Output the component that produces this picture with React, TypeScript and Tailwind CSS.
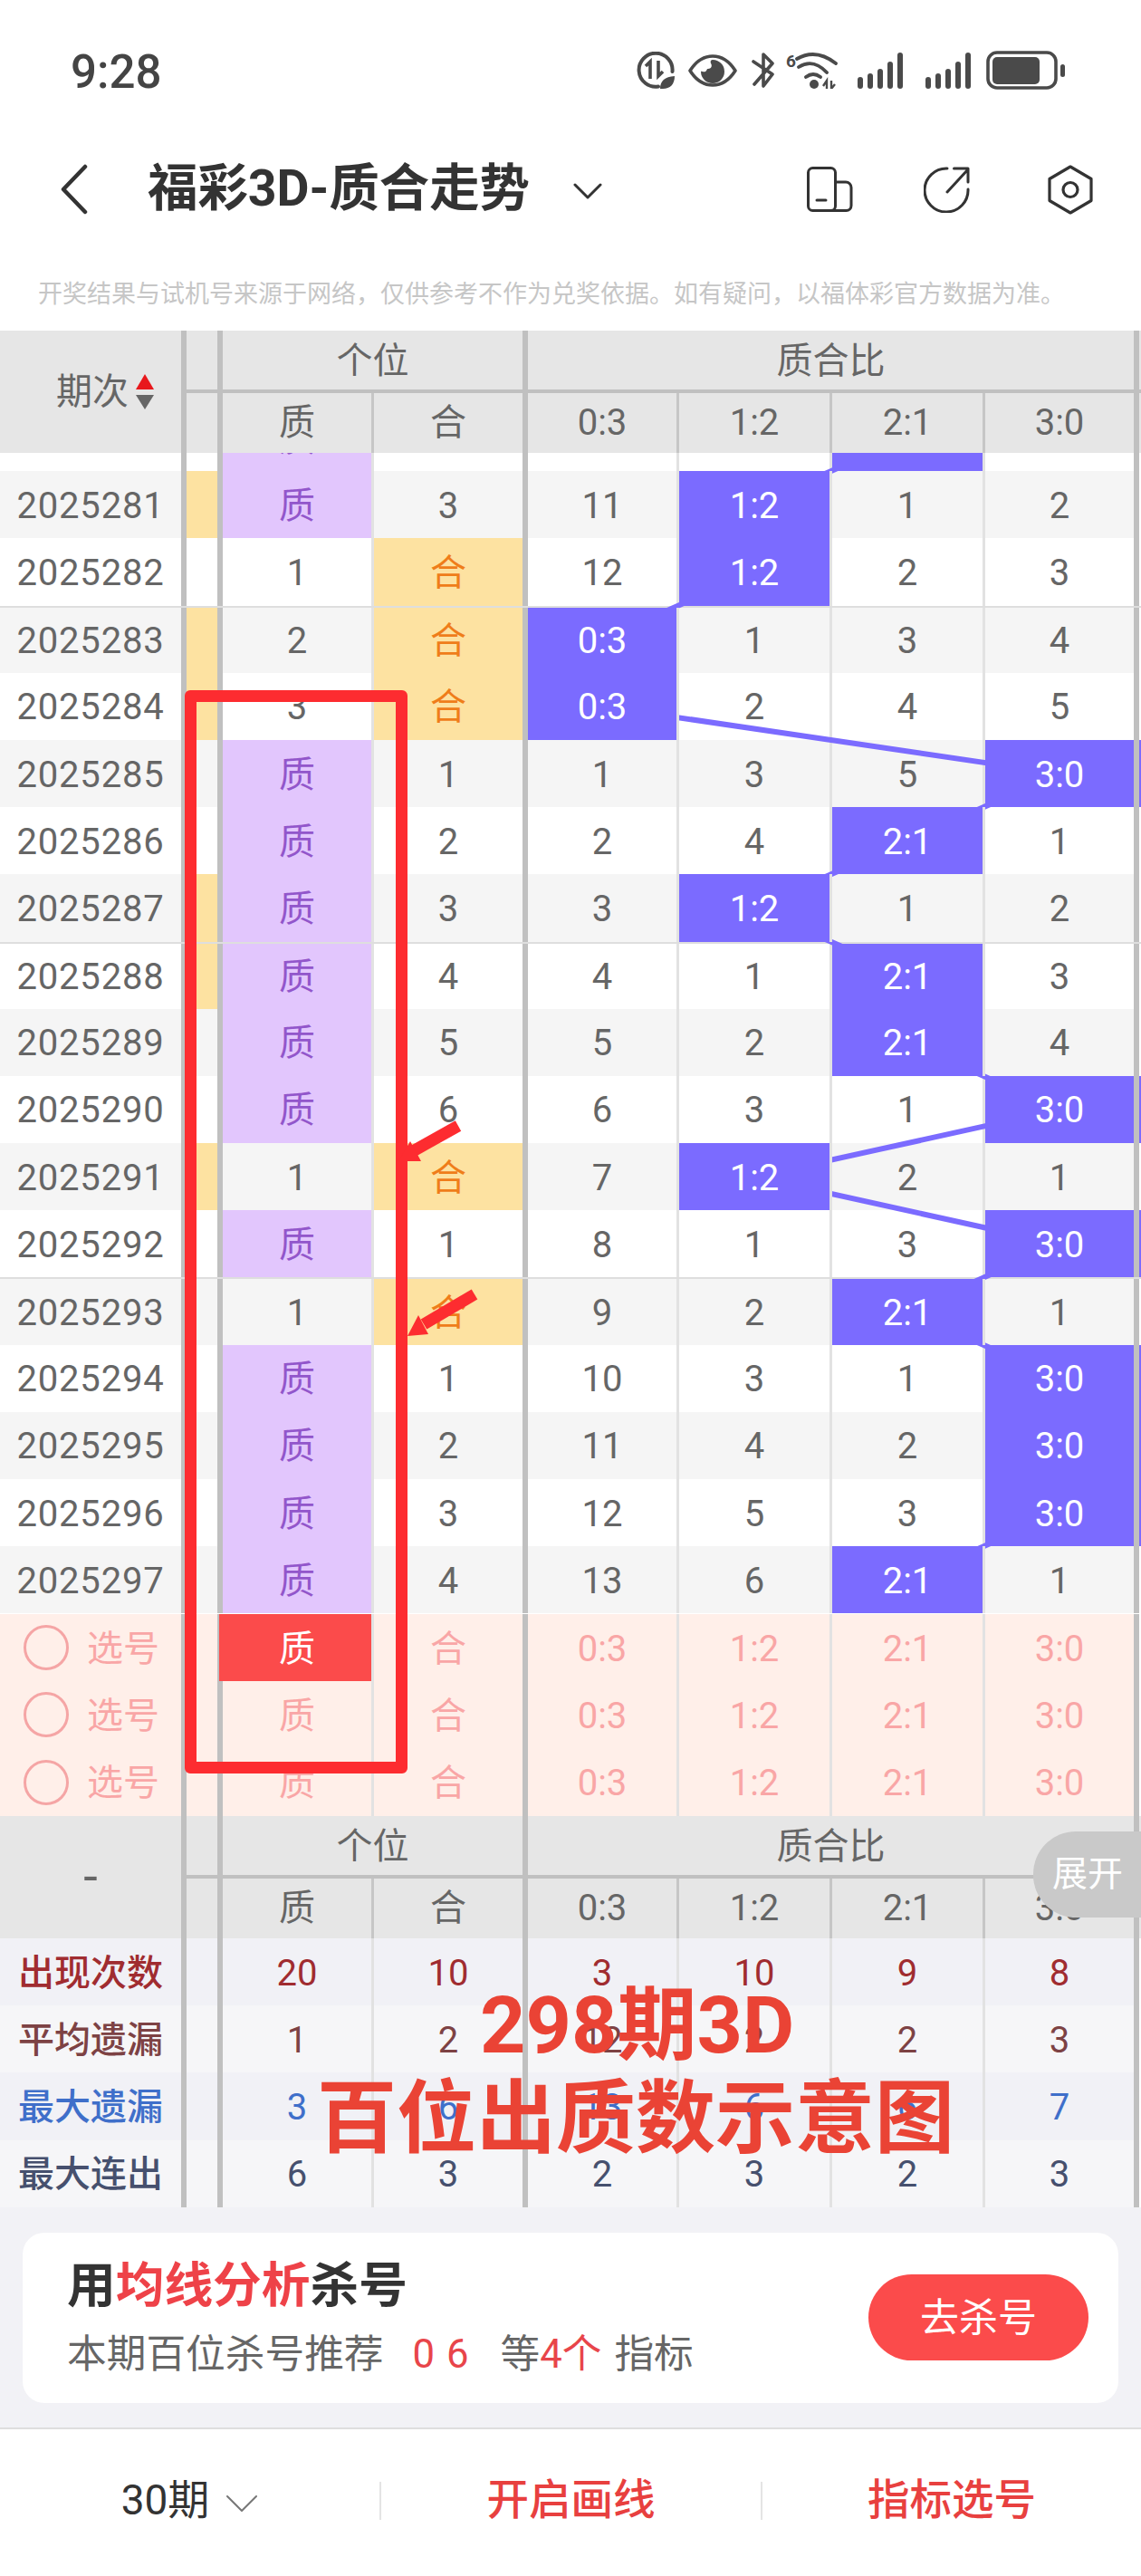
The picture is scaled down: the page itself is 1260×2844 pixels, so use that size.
import React from 'react';

const DARK = 'border-r-[6px] border-[#c0c0c0]';
const LIGHT = 'border-r-[3px] border-[#e2e2e2]';
const HEAD_LIGHT = 'border-r-[3px] border-[#c6c6c6]';

const ROW_H = 74.2;
const RATIO_X = [665, 833, 1002, 1170];
const RATIOS = ['0:3', '1:2', '2:1', '3:0'];

interface Row {
    id: string;
    side?: boolean;
    zhi: string;
    he: string;
    ratios: string[];
}

const rows: Row[] = [
    { id: '2025280', zhi: '质', he: '2', ratios: ['10', '1', '2:1', '1'] },
    { id: '2025281', side: true, zhi: '质', he: '3', ratios: ['11', '1:2', '1', '2'] },
    { id: '2025282', zhi: '1', he: '合', ratios: ['12', '1:2', '2', '3'] },
    { id: '2025283', side: true, zhi: '2', he: '合', ratios: ['0:3', '1', '3', '4'] },
    { id: '2025284', side: true, zhi: '3', he: '合', ratios: ['0:3', '2', '4', '5'] },
    { id: '2025285', zhi: '质', he: '1', ratios: ['1', '3', '5', '3:0'] },
    { id: '2025286', zhi: '质', he: '2', ratios: ['2', '4', '2:1', '1'] },
    { id: '2025287', side: true, zhi: '质', he: '3', ratios: ['3', '1:2', '1', '2'] },
    { id: '2025288', side: true, zhi: '质', he: '4', ratios: ['4', '1', '2:1', '3'] },
    { id: '2025289', zhi: '质', he: '5', ratios: ['5', '2', '2:1', '4'] },
    { id: '2025290', zhi: '质', he: '6', ratios: ['6', '3', '1', '3:0'] },
    { id: '2025291', side: true, zhi: '1', he: '合', ratios: ['7', '1:2', '2', '1'] },
    { id: '2025292', zhi: '质', he: '1', ratios: ['8', '1', '3', '3:0'] },
    { id: '2025293', zhi: '1', he: '合', ratios: ['9', '2', '2:1', '1'] },
    { id: '2025294', zhi: '质', he: '1', ratios: ['10', '3', '1', '3:0'] },
    { id: '2025295', zhi: '质', he: '2', ratios: ['11', '4', '2', '3:0'] },
    { id: '2025296', zhi: '质', he: '3', ratios: ['12', '5', '3', '3:0'] },
    { id: '2025297', zhi: '质', he: '4', ratios: ['13', '6', '2:1', '1'] },
];

const groupStart = ['2025283', '2025288', '2025293'];

const stats = [
    { label: '出现次数', values: ['20', '10', '3', '10', '9', '8'], color: 'text-[#a02c30]', bg: 'bg-[#f1f1f6]' },
    { label: '平均遗漏', values: ['1', '2', '12', '2', '2', '3'], color: 'text-[#7d4244]', bg: 'bg-[#f6f6f8]' },
    { label: '最大遗漏', values: ['3', '6', '13', '6', '6', '7'], color: 'text-[#3f6fca]', bg: 'bg-[#f1f1f6]' },
    { label: '最大连出', values: ['6', '3', '2', '3', '2', '3'], color: 'text-[#46506e]', bg: 'bg-[#f6f6f8]' },
];

const valueCols = [
    `w-[167px] ${LIGHT}`,
    `w-[170px] ${DARK}`,
    `w-[167px] ${LIGHT}`,
    `w-[169px] ${LIGHT}`,
    `w-[169px] ${LIGHT}`,
    `w-[170px] ${DARK}`,
];

const headCols = [
    `w-[167px] ${HEAD_LIGHT}`,
    `w-[170px] ${DARK}`,
    `w-[167px] ${HEAD_LIGHT}`,
    `w-[169px] ${HEAD_LIGHT}`,
    `w-[169px] ${HEAD_LIGHT}`,
    `w-[170px] ${DARK}`,
];

const center = 'flex items-center justify-center';
const cell = 'flex items-center justify-center pt-[3px]';

const StatusIcons = () => (
    <div className="flex items-center text-[#4a4a4a]">
        {/* data saver */}
        <svg width="42" height="41" viewBox="0 0 42 41" fill="none">
            <path d="M24 38.500A18.500 18.500 0 1 1 39.500 22" stroke="currentColor" strokeWidth="4" strokeLinecap="round" />
            <path d="M10 16l5-5v19M24 10v17l5-5" stroke="currentColor" strokeWidth="3.600" />
            <path d="M26 41c0-9 5-13 16-14 0 9-5 14-13 14z" fill="currentColor" />
        </svg>
        {/* eye */}
        <svg className="ml-[15px]" width="54" height="36" viewBox="0 0 54 36" fill="none">
            <path d="M2 18C9 7 17 2 27 2s18 5 25 16c-7 11-15 16-25 16S9 29 2 18z" stroke="currentColor" strokeWidth="3.600" strokeLinejoin="round" />
            <path d="M27 6a13 13 0 1 1-13 13c0-1 3 1 5 0 2-1 1-3 3-3 3 0 5-3 3-6-1-2 0-4 2-4z" fill="currentColor" />
        </svg>
        {/* bluetooth off */}
        <svg className="ml-[16px]" width="26" height="41" viewBox="0 0 26 41" fill="none">
            <path d="M2 11l21 14-10 13V3l10 10L3 36" stroke="currentColor" strokeWidth="3.600" strokeLinecap="round" strokeLinejoin="round" />
        </svg>
        {/* wifi 6 */}
        <svg className="ml-[12px]" width="57" height="41" viewBox="0 0 57 41" fill="none">
            <text x="0" y="17" fontSize="19" fontWeight="700" fill="currentColor" fontFamily="Roboto, sans-serif">6</text>
            <path d="M12 8Q33-4 55 13M14 17Q30 7 45 23M22 28Q30 22 38 28" stroke="currentColor" strokeWidth="3.800" strokeLinecap="round" />
            <circle cx="31" cy="36" r="5" fill="currentColor" />
            <path d="M41 38l4-6v9M50 32v9l4-5" stroke="currentColor" strokeWidth="2.400" />
        </svg>
        {[22, 24].map((gap) => (
            <svg key={gap} className={gap === 22 ? 'ml-[22px]' : 'ml-[24px]'} width="51" height="40" viewBox="0 0 51 40" fill="currentColor">
                <rect x="0" y="27" width="6" height="13" rx="3" />
                <rect x="11" y="23" width="6" height="17" rx="3" />
                <rect x="22" y="18" width="6" height="22" rx="3" />
                <rect x="33" y="10" width="6" height="30" rx="3" />
                <rect x="44" y="0" width="6" height="40" rx="3" />
            </svg>
        ))}
        {/* battery */}
        <svg className="ml-[16px]" width="87" height="43" viewBox="0 0 87 43" fill="none">
            <rect x="2" y="2" width="75" height="39" rx="10" stroke="currentColor" strokeWidth="3.600" />
            <rect x="7" y="7" width="52" height="30" rx="5" fill="currentColor" />
            <rect x="82" y="15" width="5" height="14" rx="2.500" fill="currentColor" />
        </svg>
    </div>
);

const NavIcons = () => (
    <div className="flex items-center text-[#333]">
        <svg width="51" height="50" viewBox="0 0 51 50" fill="none" stroke="currentColor" strokeWidth="3">
            <rect x="1.500" y="1.500" width="30" height="47" rx="5" />
            <path d="M31.500 17H43a6 6 0 0 1 6 6v20a5.500 5.500 0 0 1-5.500 5.500H27" />
            <path d="M11 37h10" strokeLinecap="round" />
        </svg>
        <svg className="ml-[78px]" width="51" height="51" viewBox="0 0 51 51" fill="none" stroke="currentColor" strokeWidth="3" strokeLinecap="round" strokeLinejoin="round">
            <path d="M26 2A24 24 0 1 0 49 25" />
            <path d="M26 28L49 3M33.500 2H49v15" />
        </svg>
        <svg className="ml-[86px]" width="50" height="55" viewBox="0 0 50 55" fill="none" stroke="currentColor" strokeWidth="3.200" strokeLinejoin="round">
            <path d="M25 2l23 13.500v24L25 53 2 39.500v-24z" />
            <circle cx="25" cy="27.500" r="8" />
        </svg>
    </div>
);

const TableHead = ({ label, sort }: { label: string; sort?: boolean }) => (
    <div className="flex h-[135px] bg-[#e6e6e6] text-[40px] text-[#666]">
        <div className={`w-[206px] ${DARK} ${center} ${sort ? 'pl-[32px]' : ''}`}>
            <span className={sort ? 'text-[40px]' : 'text-[56px] leading-none'}>{label}</span>
            {sort && (
                <span className="ml-[8px] flex flex-col gap-[6px]">
                    <span className="h-0 w-0 border-x-[10px] border-b-[17px] border-x-transparent border-b-[#e8181c]" />
                    <span className="h-0 w-0 border-x-[10px] border-t-[16px] border-x-transparent border-t-[#666]" />
                </span>
            )}
        </div>
        <div className="flex flex-1 flex-col">
            <div className="flex h-[69px] border-b-4 border-[#c0c0c0]">
                <div className={`w-[40px] ${DARK}`} />
                <div className={`w-[337px] ${DARK} ${cell}`}>个位</div>
                <div className={`w-[675px] ${DARK} ${cell}`}>质合比</div>
            </div>
            <div className="flex h-[66px]">
                <div className={`w-[40px] ${DARK}`} />
                {['质', '合', ...RATIOS].map((t, i) => (
                    <div key={t} className={`${headCols[i]} ${center}`}>{t}</div>
                ))}
            </div>
        </div>
    </div>
);

const TrendRow = ({ row, index }: { row: Row; index: number }) => {
    const bg = index % 2 === 1 ? 'bg-[#f5f5f5]' : 'bg-white';
    const line = groupStart.includes(row.id) ? 'border-t-2 border-[#dedede]' : '';
    const lastHit = row.ratios[3].includes(':');
    return (
        <div className={`flex h-[74.2px] text-[40px] text-[#666] ${bg} ${line}`}>
            <div className={`w-[206px] ${DARK} ${cell} tracking-[0.8px]`}>{row.id}</div>
            <div className={`w-[40px] ${DARK} ${row.side ? 'bg-[#fde2a1]' : ''}`} />
            <div className={`${valueCols[0]} ${cell} ${row.zhi === '质' ? 'bg-[#e2c6fd] text-[#9256cb]' : ''}`}>{row.zhi}</div>
            <div className={`${valueCols[1]} ${cell} ${row.he === '合' ? 'bg-[#fde2a1] text-[#ef7d1a]' : ''}`}>{row.he}</div>
            {row.ratios.map((v, i) => (
                <div
                    key={i}
                    className={`${valueCols[i + 2]} ${cell} ${v.includes(':') ? 'relative z-10 bg-[#7b6bff] text-white' : ''}`}
                >
                    {v}
                </div>
            ))}
            <div className={`flex-1 ${lastHit ? 'bg-[#7b6bff]' : 'bg-white'}`} />
        </div>
    );
};

const PickRow = ({ index }: { index: number }) => (
    <div className="flex h-[74.3px] bg-[#ffefe9] text-[40px] text-[#f9a6a6]">
        <div className={`w-[206px] ${DARK} flex items-center pl-[26px]`}>
            <span className="h-[50px] w-[50px] rounded-full border-[3px] border-[#f5a5a5]" />
            <span className="ml-[20px] pt-[3px]">选号</span>
        </div>
        <div className={`w-[40px] ${DARK}`} />
        <div className={`${valueCols[0]} relative ${cell}`}>
            {index === 0 && <span className="absolute -left-[4px] inset-y-0 right-0 bg-[#fb4b4b]" />}
            <span className={index === 0 ? 'relative text-white' : ''}>质</span>
        </div>
        <div className={`${valueCols[1]} ${cell}`}>合</div>
        {RATIOS.map((t, i) => (
            <div key={t} className={`${valueCols[i + 2]} ${cell}`}>{t}</div>
        ))}
        <div className="flex-1 bg-white" />
    </div>
);

export default function App() {
    const points = rows.map((r, i) => {
        const col = r.ratios.findIndex((v) => v.includes(':'));
        return `${RATIO_X[col]},${(i + 0.5) * ROW_H}`;
    });

    return (
        <div className="relative h-[2844px] w-[1260px] overflow-hidden bg-white font-['Roboto','Noto_Sans_CJK_SC',sans-serif]">
            {/* status bar */}
            <div className="flex h-[150px] items-start justify-between pt-[56px] pr-[84px] pl-[78px]">
                <span className="pt-[2px] text-[51px] leading-[44px] font-medium text-[#444]">9:28</span>
                <StatusIcons />
            </div>

            {/* nav */}
            <div className="flex h-[118px] items-center justify-between pr-[53px] pl-[67px]">
                <div className="flex items-center">
                    <svg width="30" height="56" viewBox="0 0 30 56" fill="none" stroke="#333" strokeWidth="4.500" strokeLinecap="round" strokeLinejoin="round">
                        <path d="M27 3L3 28l24 25" />
                    </svg>
                    <span className="ml-[66px] text-[55.400px] leading-none font-bold whitespace-nowrap text-[#333]">福彩3D-质合走势</span>
                    <svg className="ml-[48px] mt-[4px]" width="32" height="18" viewBox="0 0 32 18" fill="none" stroke="#333" strokeWidth="3" strokeLinecap="round" strokeLinejoin="round">
                        <path d="M2 2l14 14L30 2" />
                    </svg>
                </div>
                <NavIcons />
            </div>

            {/* disclaimer */}
            <div className="flex h-[97px] items-center pt-[18px] pl-[42px] text-[27px] whitespace-nowrap text-[#c6c6c6]">
                开奖结果与试机号来源于网络，仅供参考不作为兑奖依据。如有疑问，以福体彩官方数据为准。
            </div>

            <TableHead label="期次" sort />

            {/* trend body, first row is scrolled under the header */}
            <div className="h-[1282px] overflow-hidden">
                <div className="relative -mt-[54px]">
                    {rows.map((row, i) => (
                        <TrendRow key={row.id} row={row} index={i} />
                    ))}
                    <svg className="absolute top-0 left-0 z-0" width="1260" height={rows.length * ROW_H} fill="none">
                        <polyline points={points.join(' ')} stroke="#7b6bff" strokeWidth="6" />
                    </svg>
                </div>
            </div>

            {[0, 1, 2].map((i) => (
                <PickRow key={i} index={i} />
            ))}

            <TableHead label="-" />

            {/* stats */}
            {stats.map((s) => (
                <div key={s.label} className={`flex h-[74.250px] text-[40px] ${s.bg} ${s.color}`}>
                    <div className={`w-[206px] ${DARK} ${cell} text-[40px] font-medium`}>{s.label}</div>
                    <div className={`w-[40px] ${DARK}`} />
                    {s.values.map((v, i) => (
                        <div key={i} className={`${valueCols[i]} ${cell}`}>{v}</div>
                    ))}
                    <div className="flex-1 bg-white" />
                </div>
            ))}

            {/* kill number card */}
            <div className="h-[243px] bg-[#f2f2f6] px-[25px] pt-[28px]">
                <div className="flex h-[188px] items-center justify-between rounded-[24px] bg-white pr-[33px] pl-[49px]">
                    <div>
                        <div className="text-[53.700px] leading-[60px] font-bold text-[#333]">
                            用<span className="text-[#ee4248]">均线分析</span>杀号
                        </div>
                        <div className="mt-[20px] flex items-center text-[43.700px] leading-[50px] whitespace-nowrap text-[#666]">
                            本期百位杀号推荐
                            <span className="ml-[32px] tracking-[1px] text-[#e8454a]">0 6</span>
                            <span className="ml-[34px]">等</span>
                            <span className="text-[#e8454a]">4个</span>
                            <span className="ml-[14px]">指标</span>
                        </div>
                    </div>
                    <div className={`${center} h-[95px] w-[243px] rounded-full bg-[#fb4b4b] text-[43px] text-white`}>去杀号</div>
                </div>
            </div>

            {/* bottom bar */}
            <div className="flex h-[164px] items-center border-t-2 border-[#dedede] pb-[4px]">
                <div className={`${center} h-[42px] w-[421px] border-r-2 border-[#e4e4e4] text-[46px] text-[#333]`}>
                    30期
                    <svg className="ml-[18px] mt-[6px]" width="36" height="20" viewBox="0 0 36 20" fill="none" stroke="#777" strokeWidth="2" strokeLinecap="round" strokeLinejoin="round">
                        <path d="M2 2l16 16L34 2" />
                    </svg>
                </div>
                <div className={`${center} h-[42px] w-[421px] border-r-2 border-[#e4e4e4] text-[46.500px] font-medium text-[#e8403f]`}>开启画线</div>
                <div className={`${center} h-[42px] flex-1 text-[46.500px] font-medium text-[#e8403f]`}>指标选号</div>
            </div>

            {/* hand drawn annotations over the screenshot */}
            <div className="absolute top-[762px] left-[204px] z-20 h-[1196px] w-[246px] rounded-[6px] border-[13px] border-[#fd2c30]" />
            <svg className="absolute top-[1230px] left-[430px] z-20" width="110" height="260" viewBox="0 0 110 260">
                <path d="M76 13L26 41" stroke="#fd2c30" strokeWidth="13" />
                <path d="M10 52L23 30 35 52z" fill="#fd2c30" />
                <path d="M94 199L38 232" stroke="#fd2c30" strokeWidth="13" />
                <path d="M20 245L32 222 43 243z" fill="#fd2c30" />
            </svg>
            <div className="absolute top-[2184px] left-[354px] z-20 w-[699px] text-center text-[88px] leading-[103px] font-bold whitespace-nowrap text-[#ea4335]">
                <div>298期3D</div>
                <div className="relative -left-[4px]">百位出质数示意图</div>
            </div>

            {/* expand tab */}
            <div className="absolute top-[2022px] right-0 z-20 flex h-[95px] w-[119px] items-center rounded-l-[47px] bg-[#c9c9c9] pl-[21px] text-[39px] text-white">
                展开
            </div>
        </div>
    );
}
